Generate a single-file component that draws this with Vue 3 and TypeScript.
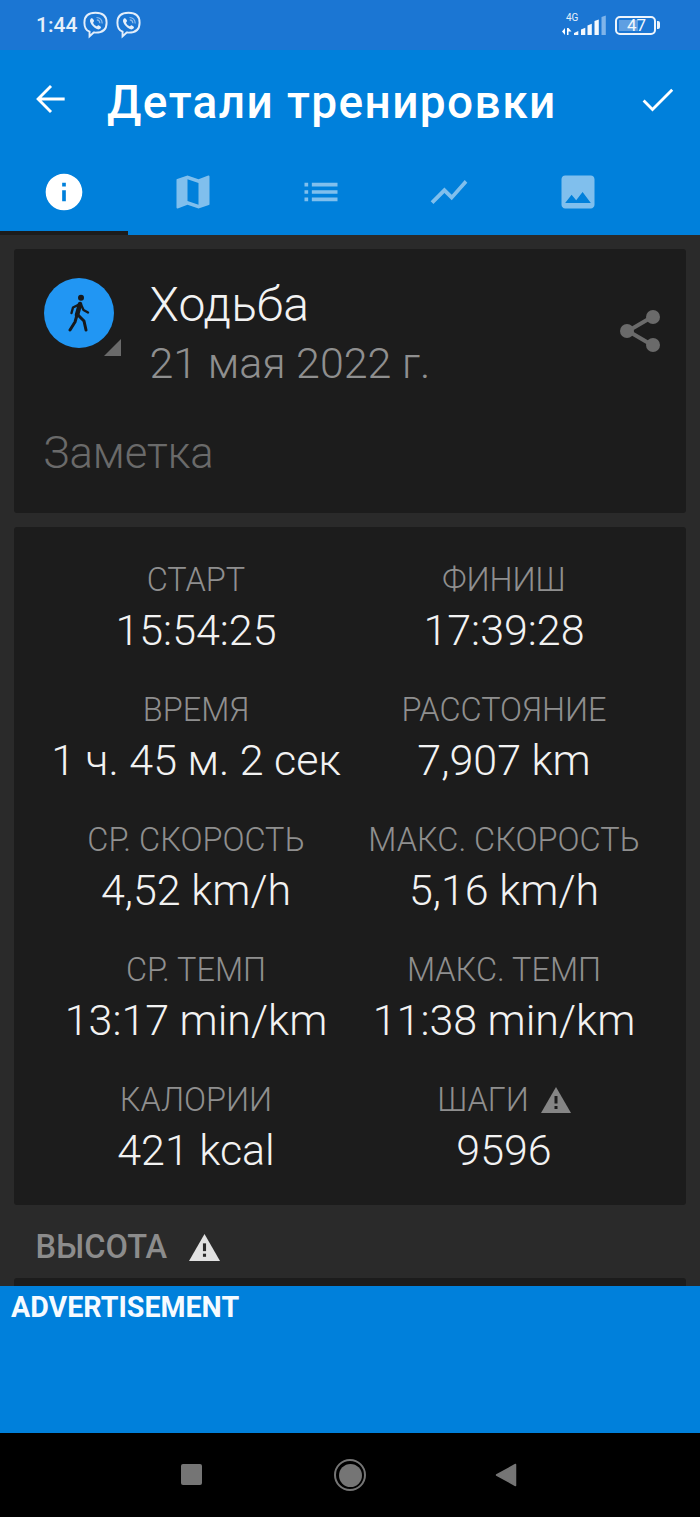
<script setup lang="ts">
interface Stat { label: string; value: string; warn?: boolean }
const stats: Stat[] = [
  { label: 'СТАРТ', value: '15:54:25' },
  { label: 'ФИНИШ', value: '17:39:28' },
  { label: 'ВРЕМЯ', value: '1 ч. 45 м. 2 сек' },
  { label: 'РАССТОЯНИЕ', value: '7,907 km' },
  { label: 'СР. СКОРОСТЬ', value: '4,52 km/h' },
  { label: 'МАКС. СКОРОСТЬ', value: '5,16 km/h' },
  { label: 'СР. ТЕМП', value: '13:17 min/km' },
  { label: 'МАКС. ТЕМП', value: '11:38 min/km' },
  { label: 'КАЛОРИИ', value: '421 kcal' },
  { label: 'ШАГИ', value: '9596', warn: true },
]
const viberPath = 'M12 2.2c-5 0-8.6 1.6-8.6 7.6 0 3.6 1.3 5.9 4 7v3.6l3.2-3c.5 0 .9.1 1.4.1 5 0 8.6-1.7 8.6-7.7S17 2.2 12 2.2z'
</script>

<template>
  <div class="screen">
    <header class="status">
      <div class="status-left">
        <span class="clock">1:44</span>
        <svg v-for="n in 2" :key="n" class="viber" viewBox="0 0 24 24" fill="none">
          <path :d="viberPath" stroke="#e3eefa" stroke-width="1.5" />
          <path d="M8.3 6.8c.8-.7 1.4-.4 1.9.4l.5.8c.3.5.2.9-.3 1.3-.3.2-.3.5-.1.9.5 1 1.2 1.7 2.2 2.2.4.2.7.2.9-.1.4-.5.8-.6 1.3-.3l.9.6c.7.5.9 1.1.2 1.8-.7.7-1.6.8-2.7.3-2.5-1.1-4.3-3-5.2-5.4-.3-1-.1-1.8.4-2.500z" fill="#e3eefa" />
          <path d="M12.8 5.8c2.6.2 4.3 1.9 4.4 4.6M13 7.7c1.5.1 2.3 1 2.4 2.5" stroke="#8fbdec" stroke-width=".9" />
        </svg>
      </div>
      <div class="status-right">
        <div class="signal">
          <span class="net">4G</span>
          <svg class="bars" viewBox="0 0 44 22">
            <path d="M0 17.5l3-3.5v7zM5 14h1.5v7H5zM6.5 14l3 3.5h-3z" fill="#fff" />
            <path d="M12 19l4.3-2v4H12zM19 15.5l4.3-1.8V21H19zM25.5 11.5l4.3-1.8V21h-4.3zM32.5 7l4.3-1.5V21h-4.3z" fill="#f3f8fd" />
            <path d="M39.5 3l4.3-1.5V21h-4.3z" fill="#7fb4ea" />
          </svg>
        </div>
        <div class="battery">
          <div class="battery-body"><span class="battery-fill"></span><span class="battery-text">47</span></div>
          <span class="battery-cap"></span>
        </div>
      </div>
    </header>

    <section class="toolbar">
      <div class="title-row">
        <svg class="action" viewBox="0 0 24 24" fill="#fff">
          <path d="M20 11.2H7.4l5.7-5.7-1.1-1.1-7.6 7.600 7.6 7.6 1.1-1.1-5.7-5.7H20z" />
        </svg>
        <h1 class="title">Детали тренировки</h1>
        <svg class="action" viewBox="0 0 24 24" fill="#fff">
          <path d="M9 16.6L4.7 12.3l-1.1 1.1L9 18.8 20.3 7.5l-1.1-1.1z" />
        </svg>
      </div>
      <nav class="tabs">
        <div class="tab active">
          <svg class="tab-icon" viewBox="0 0 24 24" fill="#fff">
            <path d="M12 2C6.48 2 2 6.48 2 12s4.48 10 10 10 10-4.48 10-10S17.52 2 12 2zm1 15h-2v-6h2v6zm0-8h-2V7h2v2z" />
          </svg>
        </div>
        <div class="tab">
          <svg class="tab-icon dim" viewBox="0 0 24 24" fill="#fff">
            <path d="M20.5 3l-.16.03L15 5.1 9 3 3.36 4.9c-.21.07-.36.25-.36.48V20.5c0 .28.22.5.5.5l.16-.03L9 18.9l6 2.1 5.64-1.9c.21-.07.36-.25.36-.48V3.5c0-.28-.22-.5-.5-.5zM15 19l-6-2.11V5l6 2.11V19z" />
          </svg>
        </div>
        <div class="tab">
          <svg class="tab-icon dim" viewBox="0 0 24 24" fill="#fff">
            <path d="M3 13h2v-2H3v2zm0 4h2v-2H3v2zm0-8h2V7H3v2zm4 4h14v-2H7v2zm0 4h14v-2H7v2zM7 7v2h14V7H7z" />
          </svg>
        </div>
        <div class="tab">
          <svg class="tab-icon dim" viewBox="0 0 24 24" fill="#fff">
            <path d="M3.5 18.49l6-6.01 4 4L22 6.92l-1.41-1.41-7.09 7.97-4-4L2 16.99z" />
          </svg>
        </div>
        <div class="tab">
          <svg class="tab-icon dim" viewBox="0 0 24 24" fill="#fff">
            <path fill-rule="evenodd" d="M21 19V5c0-1.1-.9-2-2-2H5c-1.1 0-2 .9-2 2v14c0 1.1.9 2 2 2h14c1.1 0 2-.9 2-2zM8.500 13.500l2.5 3.01L14.500 12l4.500 6H5l3.500-4.500z" />
          </svg>
        </div>
      </nav>
    </section>

    <main class="content">
      <section class="card summary">
        <div class="summary-head">
          <div class="avatar-wrap">
            <div class="avatar">
              <svg class="walker" viewBox="0 0 24 38" fill="none" stroke="#16191c" stroke-linecap="round" stroke-linejoin="round">
                <circle cx="13" cy="3.7" r="3" fill="#16191c" stroke="none" />
                <path d="M12 10L9 21" stroke-width="4.6" />
                <path d="M11 10.5L5 13.5l-1.5 5.5M13 10.5l2.5 5.5 4.5 2.5" stroke-width="2.4" />
                <path d="M9 21L7 28 2 36" stroke-width="3" />
                <path d="M10 21l6 6 2 9" stroke-width="3" />
              </svg>
            </div>
            <span class="corner"></span>
          </div>
          <div class="head-text">
            <div class="sport">Ходьба</div>
            <div class="date">21 мая 2022 г.</div>
          </div>
          <svg class="share" viewBox="0 0 40 44" fill="none">
            <path d="M32 8L8 22l24 14" stroke="#6a6a6a" stroke-width="4" />
            <circle cx="33" cy="8" r="7" fill="#6a6a6a" />
            <circle cx="7" cy="22" r="7" fill="#6a6a6a" />
            <circle cx="33" cy="36" r="7" fill="#6a6a6a" />
          </svg>
        </div>
        <div class="note">Заметка</div>
      </section>

      <section class="card stats">
        <div v-for="s in stats" :key="s.label" class="stat">
          <div class="stat-label">
            <span>{{ s.label }}</span>
            <svg v-if="s.warn" class="warn-small" viewBox="0 0 30 26">
              <path d="M15 0l15 26H0z" fill="#858585" />
              <rect x="13.5" y="9" width="3" height="7.5" fill="#1c1c1c" />
              <rect x="13.5" y="19" width="3" height="3" fill="#1c1c1c" />
            </svg>
          </div>
          <div class="stat-value">{{ s.value }}</div>
        </div>
      </section>

      <div class="section-head">
        <span>ВЫСОТА</span>
        <svg class="warn-big" viewBox="0 0 30 26">
          <path d="M15 0l15 26H0z" fill="#e2e2e2" />
          <rect x="13.5" y="9" width="3" height="7.5" fill="#2a2a2a" />
          <rect x="13.5" y="19" width="3" height="3" fill="#2a2a2a" />
        </svg>
      </div>
      <div class="card rest"></div>
    </main>

    <aside class="ad">ADVERTISEMENT</aside>

    <footer class="nav">
      <span class="nav-square"></span>
      <span class="nav-circle"><span class="nav-dot"></span></span>
      <svg class="nav-back" viewBox="0 0 22 24"><path d="M20.5 1.5v21L1.5 12z" fill="#757575" stroke="#757575" stroke-width="1.5" stroke-linejoin="round" /></svg>
    </footer>
  </div>
</template>

<style scoped>
.screen {
  width: 700px;
  height: 1517px;
  display: flex;
  flex-direction: column;
  overflow: hidden;
  background: #2a2a2a;
  font-family: Roboto, "Noto Sans", sans-serif;
}
.status {
  height: 50px;
  flex: none;
  display: flex;
  align-items: center;
  justify-content: space-between;
  padding: 0 40px 0 36px;
  background: #1b76d3;
  color: #e6f0fa;
}
.status-left { display: flex; align-items: center; gap: 2px; }
.clock { font-size: 21px; font-weight: 500; margin-right: 1px; }
.viber { width: 31px; height: 31px; }
.status-right { display: flex; align-items: center; gap: 9px; }
.signal { position: relative; width: 44px; height: 22px; }
.net { position: absolute; left: 4px; top: -2px; font-size: 10px; line-height: 12px; color: #e6f0fa; }
.bars { position: absolute; left: 0; top: 0; width: 44px; height: 22px; }
.battery { display: flex; align-items: center; gap: 1px; }
.battery-body {
  position: relative;
  width: 41px;
  height: 19px;
  box-sizing: border-box;
  border: 2px solid #eef5fc;
  border-radius: 5px;
  display: flex;
  align-items: center;
  justify-content: center;
}
.battery-fill { position: absolute; left: 2px; top: 2px; bottom: 2px; width: 19px; background: #5f9fe2; }
.battery-text { position: relative; left: 1px; font-size: 17px; line-height: 15px; color: #f1f7fd; }
.battery-cap { width: 3px; height: 8px; background: #eef5fc; border-radius: 0 2px 2px 0; }

.toolbar { flex: none; height: 185px; display: flex; flex-direction: column; background: #0080db; }
.title-row { height: 104px; display: flex; align-items: center; padding: 0 20px 0 28px; }
.action { width: 44px; height: 44px; flex: none; margin-bottom: 6px; }
.title { flex: 1; margin: 0 0 0 35px; font-size: 46px; font-weight: 500; color: #fff; letter-spacing: 1.4px; white-space: nowrap; }
.tabs { flex: 1; display: grid; grid-template-columns: repeat(5, 128.4px); }
.tab { display: flex; justify-content: center; padding-top: 16px; box-sizing: border-box; }
.tab.active { border-bottom: 4px solid #1c1c1c; }
.tab-icon { width: 44px; height: 44px; }
.tab-icon.dim { opacity: 0.5; }

.content {
  flex: 1;
  min-height: 0;
  overflow: hidden;
  padding: 14px 14px 0;
  display: flex;
  flex-direction: column;
  gap: 14px;
}
.card { flex: none; background: #1c1c1c; border-radius: 3px; }
.summary { height: 264px; box-sizing: border-box; padding: 29px 26px 0 29.5px; }
.summary-head { display: flex; align-items: flex-start; }
.avatar-wrap { position: relative; width: 78px; height: 80px; flex: none; }
.avatar {
  width: 70px;
  height: 70px;
  border-radius: 50%;
  background: #2196f3;
  display: flex;
  align-items: center;
  justify-content: center;
}
.walker { width: 24px; height: 38px; margin-left: 3px; }
.corner {
  position: absolute;
  left: 60.5px;
  top: 61px;
  width: 0;
  height: 0;
  border-left: 17px solid transparent;
  border-bottom: 17px solid #6a6a6a;
}
.head-text { flex: 1; margin-left: 28px; margin-top: -3px; }
.sport { font-size: 48px; line-height: 60px; color: #f2f2f2; font-weight: 300; }
.date { font-size: 43px; line-height: 56px; color: #8f8f8f; font-weight: 300; }
.share { width: 40px; height: 44px; flex: none; margin-top: 31px; margin-left: -1px; }
.note { margin-top: 33px; font-size: 43.6px; line-height: 60px; color: #6a6a6a; font-weight: 300; }

.stats {
  height: 678px;
  box-sizing: border-box;
  padding: 27px 28px 0;
  display: grid;
  grid-template-columns: 308px 308px;
  grid-auto-rows: 130px;
  justify-content: center;
}
.stat { display: flex; flex-direction: column; align-items: center; }
.stat-label {
  height: 52px;
  display: flex;
  align-items: center;
  gap: 12px;
  font-size: 32.5px;
  font-weight: 300;
  color: #8f8f8f;
  white-space: nowrap;
}
.warn-small { width: 30px; height: 26px; }
.stat-value { font-size: 43px; line-height: 48px; font-weight: 300; color: #f2f2f2; white-space: nowrap; }

.section-head {
  flex: none;
  height: 59px;
  margin: 0 0 -14px;
  padding: 0 0 3px 21.5px;
  box-sizing: border-box;
  display: flex;
  align-items: center;
  gap: 22px;
  font-size: 32.6px;
  font-weight: 500;
  color: #8c8c8c;
}
.warn-big { width: 31px; height: 27px; }
.rest { height: 40px; }

.ad {
  flex: none;
  height: 147px;
  box-sizing: border-box;
  padding: 4px 0 0 11px;
  background: #0080db;
  color: #f6fbff;
  font-size: 28.6px;
  line-height: 34px;
  font-weight: 700;
}
.nav { flex: none; height: 84px; background: #000; position: relative; }
.nav-square { position: absolute; left: 181px; top: 31px; width: 21px; height: 21px; background: #757575; border-radius: 2px; }
.nav-circle {
  position: absolute;
  left: 334px;
  top: 26px;
  width: 32px;
  height: 32px;
  box-sizing: border-box;
  border: 2px solid #757575;
  border-radius: 50%;
  display: flex;
  align-items: center;
  justify-content: center;
}
.nav-dot { width: 23px; height: 23px; border-radius: 50%; background: #757575; }
.nav-back { position: absolute; left: 495px; top: 30px; width: 22px; height: 24px; }
</style>
